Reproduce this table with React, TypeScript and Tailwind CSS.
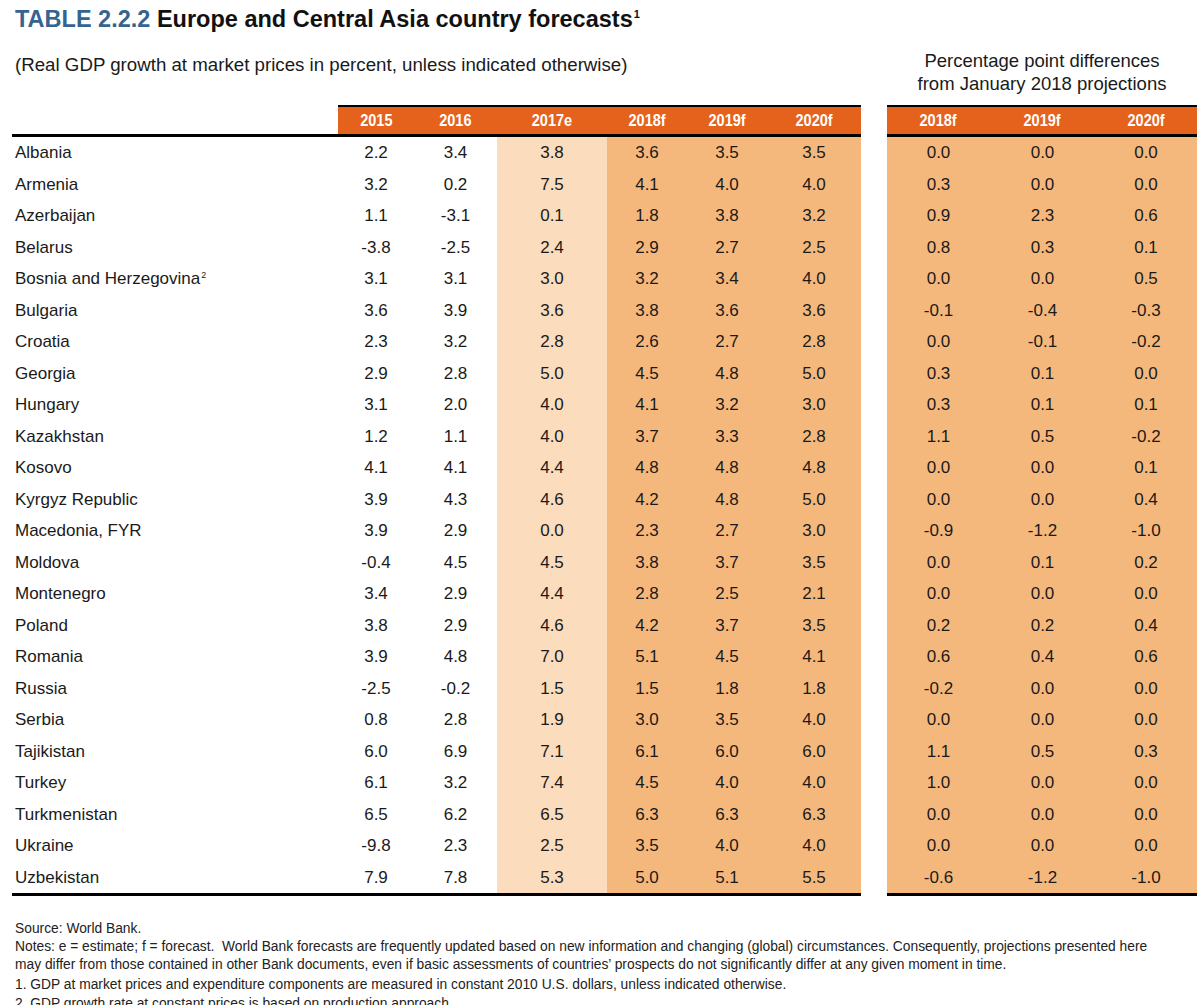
import React from "react";

const rows: [string, string[], string[]][] = [
  ["Albania", ["2.2", "3.4", "3.8", "3.6", "3.5", "3.5"], ["0.0", "0.0", "0.0"]],
  ["Armenia", ["3.2", "0.2", "7.5", "4.1", "4.0", "4.0"], ["0.3", "0.0", "0.0"]],
  ["Azerbaijan", ["1.1", "-3.1", "0.1", "1.8", "3.8", "3.2"], ["0.9", "2.3", "0.6"]],
  ["Belarus", ["-3.8", "-2.5", "2.4", "2.9", "2.7", "2.5"], ["0.8", "0.3", "0.1"]],
  ["Bosnia and Herzegovina", ["3.1", "3.1", "3.0", "3.2", "3.4", "4.0"], ["0.0", "0.0", "0.5"]],
  ["Bulgaria", ["3.6", "3.9", "3.6", "3.8", "3.6", "3.6"], ["-0.1", "-0.4", "-0.3"]],
  ["Croatia", ["2.3", "3.2", "2.8", "2.6", "2.7", "2.8"], ["0.0", "-0.1", "-0.2"]],
  ["Georgia", ["2.9", "2.8", "5.0", "4.5", "4.8", "5.0"], ["0.3", "0.1", "0.0"]],
  ["Hungary", ["3.1", "2.0", "4.0", "4.1", "3.2", "3.0"], ["0.3", "0.1", "0.1"]],
  ["Kazakhstan", ["1.2", "1.1", "4.0", "3.7", "3.3", "2.8"], ["1.1", "0.5", "-0.2"]],
  ["Kosovo", ["4.1", "4.1", "4.4", "4.8", "4.8", "4.8"], ["0.0", "0.0", "0.1"]],
  ["Kyrgyz Republic", ["3.9", "4.3", "4.6", "4.2", "4.8", "5.0"], ["0.0", "0.0", "0.4"]],
  ["Macedonia, FYR", ["3.9", "2.9", "0.0", "2.3", "2.7", "3.0"], ["-0.9", "-1.2", "-1.0"]],
  ["Moldova", ["-0.4", "4.5", "4.5", "3.8", "3.7", "3.5"], ["0.0", "0.1", "0.2"]],
  ["Montenegro", ["3.4", "2.9", "4.4", "2.8", "2.5", "2.1"], ["0.0", "0.0", "0.0"]],
  ["Poland", ["3.8", "2.9", "4.6", "4.2", "3.7", "3.5"], ["0.2", "0.2", "0.4"]],
  ["Romania", ["3.9", "4.8", "7.0", "5.1", "4.5", "4.1"], ["0.6", "0.4", "0.6"]],
  ["Russia", ["-2.5", "-0.2", "1.5", "1.5", "1.8", "1.8"], ["-0.2", "0.0", "0.0"]],
  ["Serbia", ["0.8", "2.8", "1.9", "3.0", "3.5", "4.0"], ["0.0", "0.0", "0.0"]],
  ["Tajikistan", ["6.0", "6.9", "7.1", "6.1", "6.0", "6.0"], ["1.1", "0.5", "0.3"]],
  ["Turkey", ["6.1", "3.2", "7.4", "4.5", "4.0", "4.0"], ["1.0", "0.0", "0.0"]],
  ["Turkmenistan", ["6.5", "6.2", "6.5", "6.3", "6.3", "6.3"], ["0.0", "0.0", "0.0"]],
  ["Ukraine", ["-9.8", "2.3", "2.5", "3.5", "4.0", "4.0"], ["0.0", "0.0", "0.0"]],
  ["Uzbekistan", ["7.9", "7.8", "5.3", "5.0", "5.1", "5.5"], ["-0.6", "-1.2", "-1.0"]],
];

const leftHeads = ["2015", "2016", "2017e", "2018f", "2019f", "2020f"];
const rightHeads = ["2018f", "2019f", "2020f"];

const leftBg = ["", "", "bg-[#fbdcbd]", "bg-[#f5b87c]", "bg-[#f5b87c]", "bg-[#f5b87c]"];

export default function App() {
  return (
    <div className="w-[1200px] h-[1005px] overflow-hidden bg-white text-[#1a1a1a] font-['Liberation_Sans',Arial,sans-serif]">
      <div className="pl-[15px] pt-[4px] h-[38px] text-[23.5px] font-bold leading-[30px]">
        <span className="text-[#36648f]">TABLE 2.2.2</span>{" "}
        <span className="text-[#111]">Europe and Central Asia country forecasts</span>
        <span className="text-[11px] relative top-[-9px] ml-[1px] text-[#111]">1</span>
      </div>
      <div className="flex">
        <div className="ml-[12px] w-[849px]">
          <div className="h-[67px] pl-[3px] pt-[16px] text-[18.7px] leading-[22px]">
            (Real GDP growth at market prices in percent, unless indicated otherwise)
          </div>
          <div className="grid grid-cols-[326px_76px_83px_110px_80px_80px_94px]">
            <div className="h-[32px] border-b-[3px] border-black" />
            {leftHeads.map((h) => (
              <div
                key={h}
                className="h-[32px] border-t-[2px] border-b-[3px] border-black bg-[#e5621c] text-white font-bold text-[16.5px] flex items-center justify-center"
              >
                <span className="inline-block scale-x-[0.88]">{h}</span>
              </div>
            ))}
            {rows.map(([name, vals]) => (
              <React.Fragment key={name}>
                <div className="h-[31.5px] pl-[3px] flex items-center text-[17px]">
                  {name === "Bosnia and Herzegovina" ? (
                    <span>
                      Bosnia and Herzegovina
                      <span className="text-[9px] relative top-[-6px] ml-[1px]">2</span>
                    </span>
                  ) : (
                    name
                  )}
                </div>
                {vals.map((v, i) => (
                  <div
                    key={i}
                    className={`h-[31.5px] flex items-center justify-center text-[17px] ${leftBg[i]}`}
                  >
                    {v}
                  </div>
                ))}
              </React.Fragment>
            ))}
          </div>
          <div className="h-[3px] bg-black" />
        </div>
        <div className="ml-[26px] w-[310px]">
          <div className="h-[67px] text-center text-[18.5px] leading-[23px] pt-[11px]">
            <div>Percentage point differences</div>
            <div>from January 2018 projections</div>
          </div>
          <div className="grid grid-cols-[103px_105px_102px]">
            {rightHeads.map((h) => (
              <div
                key={h}
                className="h-[32px] border-t-[2px] border-b-[3px] border-black bg-[#e5621c] text-white font-bold text-[16.5px] flex items-center justify-center"
              >
                <span className="inline-block scale-x-[0.88]">{h}</span>
              </div>
            ))}
            {rows.map(([name, , diffs]) => (
              <React.Fragment key={name}>
                {diffs.map((v, i) => (
                  <div
                    key={i}
                    className="h-[31.5px] flex items-center justify-center text-[17px] bg-[#f5b87c]"
                  >
                    {v}
                  </div>
                ))}
              </React.Fragment>
            ))}
          </div>
          <div className="h-[3px] bg-black" />
        </div>
      </div>
      <div className="pl-[15px] pt-[24px] text-[13.8px] leading-[18px] text-[#222]">
        <div>Source: World Bank.</div>
        <div>
          Notes: e = estimate; f = forecast.&nbsp; World Bank forecasts are frequently updated based on new information and changing (global) circumstances. Consequently, projections presented here
          <br />
          may differ from those contained in other Bank documents, even if basic assessments of countries’ prospects do not significantly differ at any given moment in time.
        </div>
        <div className="mt-[2px]">1. GDP at market prices and expenditure components are measured in constant 2010 U.S. dollars, unless indicated otherwise.</div>
        <div className="mt-[1px]">2. GDP growth rate at constant prices is based on production approach.</div>
      </div>
    </div>
  );
}
